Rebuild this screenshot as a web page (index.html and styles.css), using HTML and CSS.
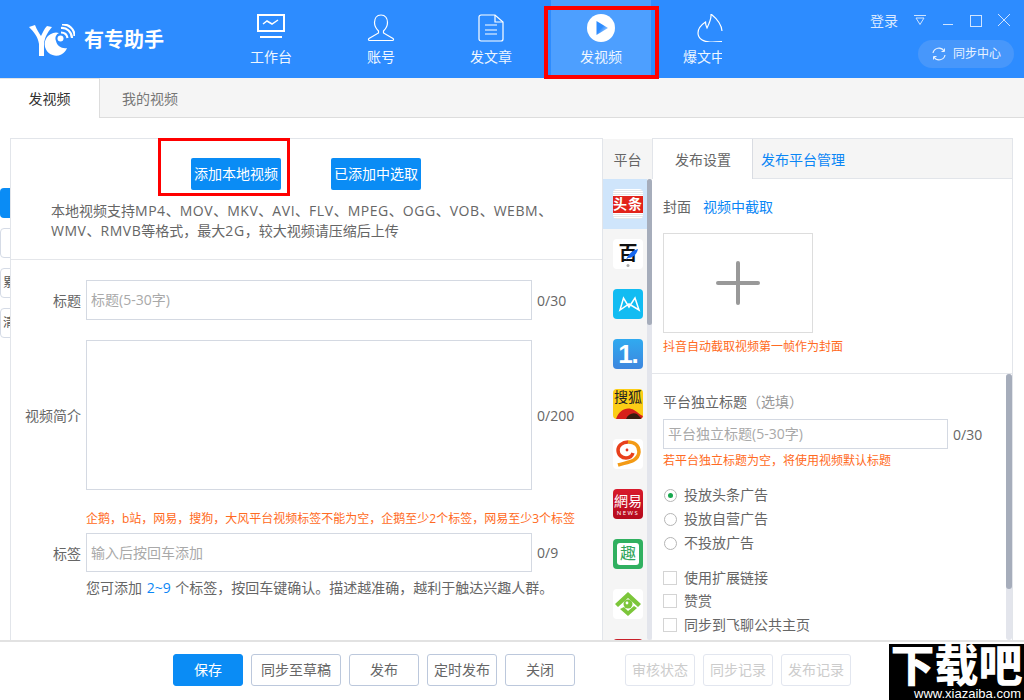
FILE: index.html
```html
<!DOCTYPE html>
<html lang="zh-CN">
<head>
<meta charset="utf-8">
<title>有专助手</title>
<link rel="stylesheet" href="styles.css">
</head>
<body>
<div class="app">
  <header class="top">
    <div class="brand">
      <svg class="logo" viewBox="0 0 46 32" width="46" height="32">
        <path d="M0 3 L6 1 C8 6 10 9 12 12 C14 8 15 5 18 2 L23 3 C18 9 15.500 14 15 20 L15 32 L10 32 L10 20 C9 13 5 8 0 3Z" fill="#fff"/>
        <path d="M30 9 A11.500 11.500 0 1 0 38 24 C33 25 28 22 27 17 A6 6 0 0 1 30 9Z" fill="#fff"/>
        <circle cx="31.500" cy="14.500" r="3" fill="#fff"/>
        <path d="M32 8.500 C36 8.500 38 11 38.500 14 M32 4 C38 3.500 42.500 8 43 14 M33 0.500 C40 0 45.500 5 45.500 12" fill="none" stroke="#fff" stroke-width="2.200"/>
      </svg>
      <span class="brand-name">有专助手</span>
    </div>
    <nav class="nav">
      <a class="nav-item">
        <svg viewBox="0 0 30 28" width="30" height="28" fill="none" stroke="#fff"><rect x="2" y="1" width="26" height="16" stroke-width="2"/><path d="M7 10 L11 7 L16 10 L22 6" stroke-width="1.500"/><path d="M4 23 H26" stroke-width="2"/></svg>
        <span>工作台</span>
      </a>
      <a class="nav-item">
        <svg viewBox="0 0 30 28" width="30" height="28" fill="none" stroke="#fff" stroke-width="1.200"><path d="M15 1 C10.500 1 8.500 4.500 8.500 8.500 C8.500 12.500 10.500 15 12.500 17 L12.500 19 L3 24.500 C2 25.500 2.500 26.500 3.500 26.500 H26.500 C27.500 26.500 28 25.500 27 24.500 L17.500 19 L17.500 17 C19.500 15 21.500 12.500 21.500 8.500 C21.500 4.500 19.500 1 15 1Z"/></svg>
        <span>账号</span>
      </a>
      <a class="nav-item">
        <svg viewBox="0 0 30 28" width="30" height="28" fill="none" stroke="#fff" stroke-width="1.200"><path d="M6 1 H19 L27 8 V25 A2 2 0 0 1 25 27 H5 A2 2 0 0 1 3 25 V3 A2 2 0 0 1 5 1Z"/><path d="M19 1 V8 H27"/><path d="M9 11 H21 M9 16 H21 M9 20 H21"/></svg>
        <span>发文章</span>
      </a>
      <a class="nav-item nav-on">
        <svg viewBox="0 0 30 28" width="30" height="28"><defs><linearGradient id="pg" x1="0" y1="0" x2="1" y2="1"><stop offset="0.450" stop-color="#2d8cff"/><stop offset="1" stop-color="#dfeeff"/></linearGradient></defs><circle cx="15" cy="14" r="14" fill="#fff"/><path d="M10.500 7 L22 14 L10.500 21Z" fill="url(#pg)"/></svg>
        <span>发视频</span>
      </a>
      <a class="nav-item nav-last">
        <svg viewBox="0 0 48 28" width="48" height="28" fill="none" stroke="#fff" stroke-width="1.200"><path d="M43 17 C42.500 10 37 4 32 0 C32.500 5 30 10 28 14 C27 12 26.500 10 26.500 8 C22 11 19 15 19 19 C19 25 25 28 31 28 C35 28 39 27.500 43 27.500"/></svg>
        <span>爆文中</span>
      </a>
    </nav>
    <div class="win">
      <div class="win-row">
        <span class="login">登录</span>
        <svg class="w-drop" viewBox="0 0 12 10" width="12" height="10" fill="none" stroke="#cfe4ff"><path d="M0 .500 H12 M2 3 H10 L6 9.500Z"/></svg>
        <svg class="w-min" viewBox="0 0 10 12" width="10" height="12" fill="none" stroke="#cfe4ff"><path d="M0 10.500 H10"/></svg>
        <svg class="w-max" viewBox="0 0 12 12" width="12" height="12" fill="none" stroke="#cfe4ff"><rect x=".500" y=".500" width="11" height="11"/></svg>
        <svg class="w-close" viewBox="0 0 12 12" width="12" height="12" fill="none" stroke="#cfe4ff"><path d="M0 0 L12 12 M12 0 L0 12"/></svg>
      </div>
      <div class="sync">
        <svg viewBox="0 0 14 14" width="14" height="14" fill="none" stroke="#e6f1ff" stroke-width="1.200"><path d="M1 6 A6 6 0 0 1 12 4 M13 8 A6 6 0 0 1 2 10"/><path d="M12.500 1.500 V4.500 H9.500 M1.500 12.500 V9.500 H4.500" stroke-width="1"/></svg>
        <span>同步中心</span>
      </div>
    </div>
  </header>

  <div class="tabs">
    <a class="tab tab-on">发视频</a>
    <a class="tab">我的视频</a>
  </div>

  <main class="main">
    <div class="strip">
      <span class="strip-blue"></span>
      <span class="strip-box"></span>
      <span class="strip-box">累</span>
      <span class="strip-box">清</span>
    </div>

    <section class="left">
      <div class="upload">
        <div class="upload-btns">
          <a class="btn-up">添加本地视频</a>
          <a class="btn-up">已添加中选取</a>
        </div>
        <p class="upload-note">本地视频支持<span>MP4</span>、<span>MOV</span>、<span>MKV</span>、<span>AVI</span>、<span>FLV</span>、<span>MPEG</span>、<span>OGG</span>、<span>VOB</span>、<span>WEBM</span>、<br><span>WMV</span>、<span>RMVB</span>等格式，最大<span>2G</span>，较大视频请压缩后上传</p>
      </div>
      <div class="form">
        <label class="lab lab-title">标题</label>
        <div class="field f-title">标题(5-30字)</div>
        <span class="cnt cnt-title">0/30</span>

        <label class="lab">视频简介</label>
        <div class="field f-desc"></div>
        <span class="cnt">0/200</span>

        <p class="warn warn-tags">企鹅，b站，网易，搜狗，大风平台视频标签不能为空，企鹅至少2个标签，网易至少3个标签</p>

        <label class="lab">标签</label>
        <div class="field f-tag">输入后按回车添加</div>
        <span class="cnt">0/9</span>

        <p class="tip">您可添加 <em>2~9</em> 个标签，按回车键确认。描述越准确，越利于触达兴趣人群。</p>
      </div>
    </section>

    <aside class="plat">
      <div class="plat-head">平台</div>
      <div class="plat-body">
        <ul class="plat-list">
          <li class="plat-item on"><span class="pi pi-tt"><b>头条</b></span></li>
          <li class="plat-item"><span class="pi pi-bai"><b>百</b>
            <svg viewBox="0 0 30 30" width="30" height="30"><path d="M13 21 C15 15 20 11 25 10 C24 15 20 19 15 19Z" fill="#1668f0"/><circle cx="15" cy="26.500" r="1.500" fill="#aaa"/></svg></span></li>
          <li class="plat-item"><span class="pi pi-m"><svg viewBox="0 0 30 30" width="30" height="30" fill="none" stroke="#fff" stroke-width="1.500"><path d="M7 21 L10.500 9 L16 18 L22 9 L26 21 L16 15 Z"/></svg></span></li>
          <li class="plat-item"><span class="pi pi-one"><b>1.</b></span></li>
          <li class="plat-item"><span class="pi pi-sohu"><b>搜狐</b><svg viewBox="0 0 30 14" width="30" height="14"><path d="M3 14 C6 5 14 1 21 5 C25 7 27 10 30 11 L30 14Z" fill="#d6201a"/><path d="M13 14 C15 9 20 7 24 9 L29 14Z" fill="#3a1d10"/></svg></span></li>
          <li class="plat-item"><span class="pi pi-fish"><svg viewBox="0 0 30 30" width="30" height="30" fill="none"><path d="M5 26 C14 23 25 23 26 13 C26 6 21 3 15 3" stroke="#f39a14" stroke-width="3.500"/><path d="M15 3 C9 3 5 7 5 11 C5 16 9 19 13 19 C16 19 19 17 20 14" stroke="#e8401c" stroke-width="3.500"/><circle cx="14" cy="11" r="1.400" fill="#e8341c"/></svg></span></li>
          <li class="plat-item"><span class="pi pi-163"><b>網易</b><i>NEWS</i></span></li>
          <li class="plat-item"><span class="pi pi-qu"><b>趣</b></span></li>
          <li class="plat-item"><span class="pi pi-eye"><svg viewBox="0 0 30 30" width="30" height="30"><path d="M15 3 L28 15 L25 18 L15 9 L5 18 L2 15Z" fill="#7cc63a"/><path d="M15 27 L24 19 L21 17 L15 22 L11 18 L7 20Z" fill="#7cc63a"/><circle cx="15" cy="15" r="4.500" fill="#7cc63a"/><circle cx="14" cy="14" r="1.400" fill="#fff"/></svg></span></li>
          <li class="plat-item"><span class="pi pi-last"></span></li>
        </ul>
        <div class="bar bar-plat"><span></span></div>
      </div>
    </aside>

    <section class="right">
      <div class="r-tabs">
        <a class="r-tab r-on">发布设置</a>
        <a class="r-tab r-link">发布平台管理</a>
      </div>
      <div class="cover">
        <div class="cover-row"><span>封面</span><a>视频中截取</a></div>
        <div class="cover-box"><span class="plus-h"></span><span class="plus-v"></span></div>
        <p class="warn">抖音自动截取视频第一帧作为封面</p>
      </div>
      <div class="opts">
        <div class="opts-in">
          <p class="o-title">平台独立标题<span>（选填）</span></p>
          <div class="o-line"><div class="field f-alone">平台独立标题(5-30字)</div><span class="cnt">0/30</span></div>
          <p class="warn w-alone">若平台独立标题为空，将使用视频默认标题</p>
          <div class="radios">
            <div class="opt"><span class="radio sel"></span>投放头条广告</div>
            <div class="opt"><span class="radio"></span>投放自营广告</div>
            <div class="opt"><span class="radio"></span>不投放广告</div>
          </div>
          <div class="checks">
            <div class="opt"><span class="check"></span>使用扩展链接</div>
            <div class="opt"><span class="check"></span>赞赏</div>
            <div class="opt"><span class="check"></span>同步到飞聊公共主页</div>
          </div>
        </div>
        <div class="bar bar-opts"><span></span></div>
      </div>
    </section>
  </main>

  <footer class="foot">
    <a class="fb fb-main">保存</a>
    <a class="fb fb-wide">同步至草稿</a>
    <a class="fb">发布</a>
    <a class="fb">定时发布</a>
    <a class="fb">关闭</a>
    <a class="fb fb-off fb-gap">审核状态</a>
    <a class="fb fb-off">同步记录</a>
    <a class="fb fb-off">发布记录</a>
  </footer>
</div>

<div class="frame frame-nav"></div>
<div class="frame frame-btn"></div>
<div class="mark"><b>下载吧</b><span>www.xiazaiba.com</span></div>
</body>
</html>
```
FILE: styles.css
```css
* { box-sizing: border-box; margin: 0; padding: 0; }
html, body { width: 1024px; height: 700px; overflow: hidden; background: #fff; }
body { font-family: "Open Sans", "Noto Sans CJK SC", sans-serif; font-size: 14px; color: #666; position: relative; }
a { cursor: default; }
em, i { font-style: normal; }
ul { list-style: none; }

.app { display: flex; flex-direction: column; height: 700px; }

/* header */
.top { height: 78px; background: #2d8cff; display: flex; color: #fff; flex: none; }
.brand { width: 221px; padding: 24px 0 0 29px; display: flex; align-items: flex-start; gap: 9px; }
.brand-name { font-size: 20px; font-weight: 700; line-height: 32px; color: #fff; }
.nav { display: flex; gap: 10px; height: 78px; }
.nav-item { width: 100px; display: flex; flex-direction: column; align-items: center; padding-top: 14px; color: #eef6ff; }
.nav-item span { font-size: 14px; line-height: 20px; margin-top: 5px; }
.nav-on { background: #4d9fff; }
.nav-last { width: 83px; }
.nav-last span { width: 39px; height: 20px; overflow: hidden; white-space: nowrap; }

.win { margin-left: auto; width: 154px; padding-top: 12px; padding-right: 10px; }
.win-row { display: flex; align-items: flex-start; height: 28px; }
.login { font-size: 14px; line-height: 18px; color: #dbeaff; }
.w-drop { margin: 3px 0 0 16px; }
.w-min { margin: 2px 0 0 17px; }
.w-max { margin: 3px 0 0 17px; }
.w-close { margin: 2px 0 0 16px; }
.sync { width: 96px; height: 28px; border-radius: 14px; background: #4797fb; display: flex; align-items: center; padding-left: 14px; gap: 7px; font-size: 12px; color: #eaf3ff; margin-left: 48px; }
.sync span { padding-bottom: 2px; }

/* tabs */
.tabs { height: 40px; flex: none; background: #f5f5f5; border-bottom: 1px solid #ddd; display: flex; }
.tab { width: 100px; line-height: 41px; text-align: center; font-size: 14px; color: #777; }
.tab-on { background: #fff; color: #333; height: 40px; border-right: 1px solid #ddd; border-top: 1px solid #e4e4e4; line-height: 40px; }
.tab + .tab { width: 100px; text-align: left; padding-left: 22px; }

/* main */
.main { flex: 1; display: flex; padding-top: 20px; min-height: 0; overflow: hidden; }
.strip { width: 10px; flex: none; padding-top: 50px; display: flex; flex-direction: column; gap: 10px; overflow: hidden; }
.strip-blue { height: 30px; background: #0a8cf5; border-radius: 4px 0 0 4px; }
.strip-box { height: 30px; width: 14px; border: 1px solid #d5dbe6; border-radius: 4px; font-size: 12px; line-height: 28px; padding-left: 2px; color: #555; flex: none; }

.left { width: 593px; flex: none; border-left: 1px solid #e2e5ea; border-top: 1px solid #e2e5ea; border-right: 1px solid #e2e5ea; }
.upload { height: 121px; border-bottom: 1px solid #e4e6ea; padding: 19px 0 0 40px; }
.upload-btns { display: flex; gap: 50px; padding-left: 140px; }
.btn-up { width: 90px; height: 32px; background: #0a8cf5; color: #fff; border-radius: 2px; font-size: 14px; line-height: 32px; text-align: center; }
.upload-note { font-size: 14px; line-height: 20px; margin-top: 11px; color: #666; white-space: nowrap; }
.upload-note span { letter-spacing: .55px; }

.form { display: grid; grid-template-columns: 70px 446px auto; column-gap: 5px; padding: 20px 0 0 0; align-items: center; }
.lab { text-align: right; font-size: 14px; color: #666; }
.lab-title { margin-bottom: 21px; }
.cnt-title { margin-bottom: 20px; }
.field { border: 1px solid #d4d9e2; font-size: 14px; color: #a9a9a9; padding-left: 4px; background: #fff; }
.f-title { height: 40px; line-height: 38px; margin-bottom: 20px; }
.f-desc { height: 150px; }
.f-tag { height: 39px; line-height: 37px; }
.cnt { font-size: 14px; color: #666; }
.warn { font-size: 12px; line-height: 16px; color: #ff6a22; white-space: nowrap; }
.warn-tags { grid-column: 2 / 4; margin: 21px 0 6px; }
.tip { grid-column: 2 / 4; font-size: 14px; line-height: 20px; margin-top: 6px; color: #666; white-space: nowrap; word-spacing: 1px; }
.tip em { color: #0a86f5; }

/* platforms */
.plat { width: 49px; flex: none; margin-top: 1px; display: flex; flex-direction: column; background: #f5f5f5; }
.plat-head { height: 40px; line-height: 41px; text-align: center; font-size: 14px; color: #666; background: #f5f5f5; flex: none; width: 49px; }
.plat-body { flex: 1; display: flex; min-height: 0; overflow: hidden; }
.plat-list { flex: 1; }
.plat-item { height: 50px; display: flex; align-items: center; padding-left: 10px; }
.plat-item.on { background: #cfe5fb; }
.pi { width: 30px; height: 30px; border-radius: 4px; display: block; overflow: hidden; text-align: center; flex: none; }
.pi b { display: block; }
.pi-tt { background: repeating-linear-gradient(#fff 0 1px, #e6e6e6 1px 2px); padding-top: 7px; }
.pi-tt b { background: #e2231a; color: #fff; height: 17px; line-height: 16px; font-size: 14px; letter-spacing: 1px; }
.pi-bai { background: #fff; position: relative; }
.pi-bai b { color: #111; font-size: 19px; line-height: 25px; font-family: "Noto Sans CJK SC", sans-serif; }
.pi-bai svg { position: absolute; left: 0; top: 0; }
.pi-m { background: #12bcf2; }
.pi-one { background: linear-gradient(#30aaf0, #3d86de); }
.pi-one b { color: #fff; font-size: 26px; line-height: 30px; font-family: "Liberation Sans", sans-serif; letter-spacing: -1px; }
.pi-sohu { background: #fbcd16; }
.pi-sohu b { color: #222; font-size: 14px; line-height: 15px; height: 16px; font-weight: 400; }
.pi-sohu svg { display: block; }
.pi-fish { background: #fff; }
.pi-163 { background: linear-gradient(#d81a2c, #b50a1c); color: #fff; }
.pi-163 b { font-size: 14px; line-height: 17px; padding-top: 3px; font-weight: 400; }
.pi-163 i { display: block; font-size: 6px; line-height: 8px; letter-spacing: 1.500px; }
.pi-qu { background: #30b060; padding: 4px; }
.pi-qu b { background: #fff; border-radius: 3px; height: 22px; line-height: 21px; font-size: 16px; color: #30a55c; font-weight: 400; }
.pi-eye { background: #fff; }
.pi-last { background: #c8202a; }
.bar { flex: none; width: 6px; background: #e3e5ec; border-radius: 3px; }
.bar span { display: block; background: #a6adbb; border-radius: 3px; }
.bar-plat { width: 5px; }
.bar-plat span { height: 146px; }

/* right */
.right { width: 361px; flex: none; display: flex; flex-direction: column; border-top: 1px solid #e2e5ea; border-right: 1px solid #e2e5ea; min-height: 0; }
.r-tabs { height: 40px; flex: none; display: flex; background: #f5f5f5; border-bottom: 1px solid #e2e5ea; }
.r-tab { line-height: 41px; font-size: 14px; }
.r-on { width: 101px; height: 40px; background: #fff; text-align: center; border-right: 1px solid #d9dce2; border-left: 1px solid #e2e5ea; padding-left: 1px; }
.r-link { color: #0a86f5; padding-left: 8px; }
.cover { height: 195px; flex: none; border-bottom: 1px solid #e4e6ea; padding: 18px 0 0 11px; }
.cover-row { display: flex; gap: 12px; font-size: 14px; line-height: 20px; }
.cover-row a { color: #0a86f5; }
.cover-box { width: 150px; height: 100px; border: 1px solid #ddd; margin-top: 16px; display: grid; place-items: center; }
.plus-h, .plus-v { grid-area: 1 / 1; background: #999; border-radius: 2px; }
.plus-h { width: 44px; height: 4px; }
.plus-v { width: 4px; height: 44px; }
.cover .warn { margin-top: 4px; line-height: 20px; }

.opts { flex: 1; display: flex; min-height: 0; overflow: hidden; }
.opts-in { flex: 1; padding: 17px 0 0 11px; overflow: hidden; }
.o-title { font-size: 14px; line-height: 22px; color: #666; }
.o-title span { color: #999; }
.o-line { display: flex; align-items: center; gap: 5px; margin-top: 6px; }
.f-alone { width: 285px; height: 30px; line-height: 27px; padding-left: 4px; }
.w-alone { margin-top: 4px; line-height: 16px; }
.radios { margin-top: 14px; }
.checks { margin-top: 11px; }
.opt { height: 24px; display: flex; align-items: center; font-size: 14px; color: #666; line-height: 22px; }
.checks .opt { height: 23.500px; }
.radio { width: 13px; height: 13px; border: 1px solid #b5b5b5; border-radius: 50%; margin: 0 7px 0 1px; display: grid; place-items: center; }
.radio.sel::after { content: ""; width: 5px; height: 5px; border-radius: 50%; background: #17a84e; }
.check { width: 14px; height: 14px; border: 1px solid #d4d4d4; margin-right: 7px; }
.bar-opts span { height: 215px; }

/* footer */
.foot { height: 60px; flex: none; border-top: 2px solid #e2e2e2; display: flex; padding: 12px 0 0 173px; gap: 8px; }
.fb { width: 70px; height: 32px; border: 1px solid #bcc8dc; border-radius: 3px; font-size: 14px; line-height: 30px; text-align: center; color: #666; white-space: nowrap; }
.fb-main { background: #0a8cf5; border-color: #0a8cf5; color: #fff; }
.fb-wide { width: 90px; }
.fb-off { color: #ccc; border-color: #e2e6ef; }
.fb-gap { margin-left: 42px; }

/* overlays */
.frame { position: absolute; border: 3px solid #f00; }
.frame-nav { left: 544px; top: 6px; width: 115px; height: 73px; border-width: 4px; }
.frame-btn { left: 158px; top: 138px; width: 132px; height: 58px; }
.mark { position: absolute; left: 889px; top: 644px; width: 135px; height: 56px; background: #000; color: #fff; text-align: right; overflow: hidden; }
.mark b { display: block; text-align: center; font-size: 44px; height: 44px; line-height: 42px; font-weight: 900; white-space: nowrap; }
.mark span { display: block; font-family: "Liberation Sans", sans-serif; font-size: 13px; height: 12px; line-height: 11px; padding-right: 3px; white-space: nowrap; }
```
